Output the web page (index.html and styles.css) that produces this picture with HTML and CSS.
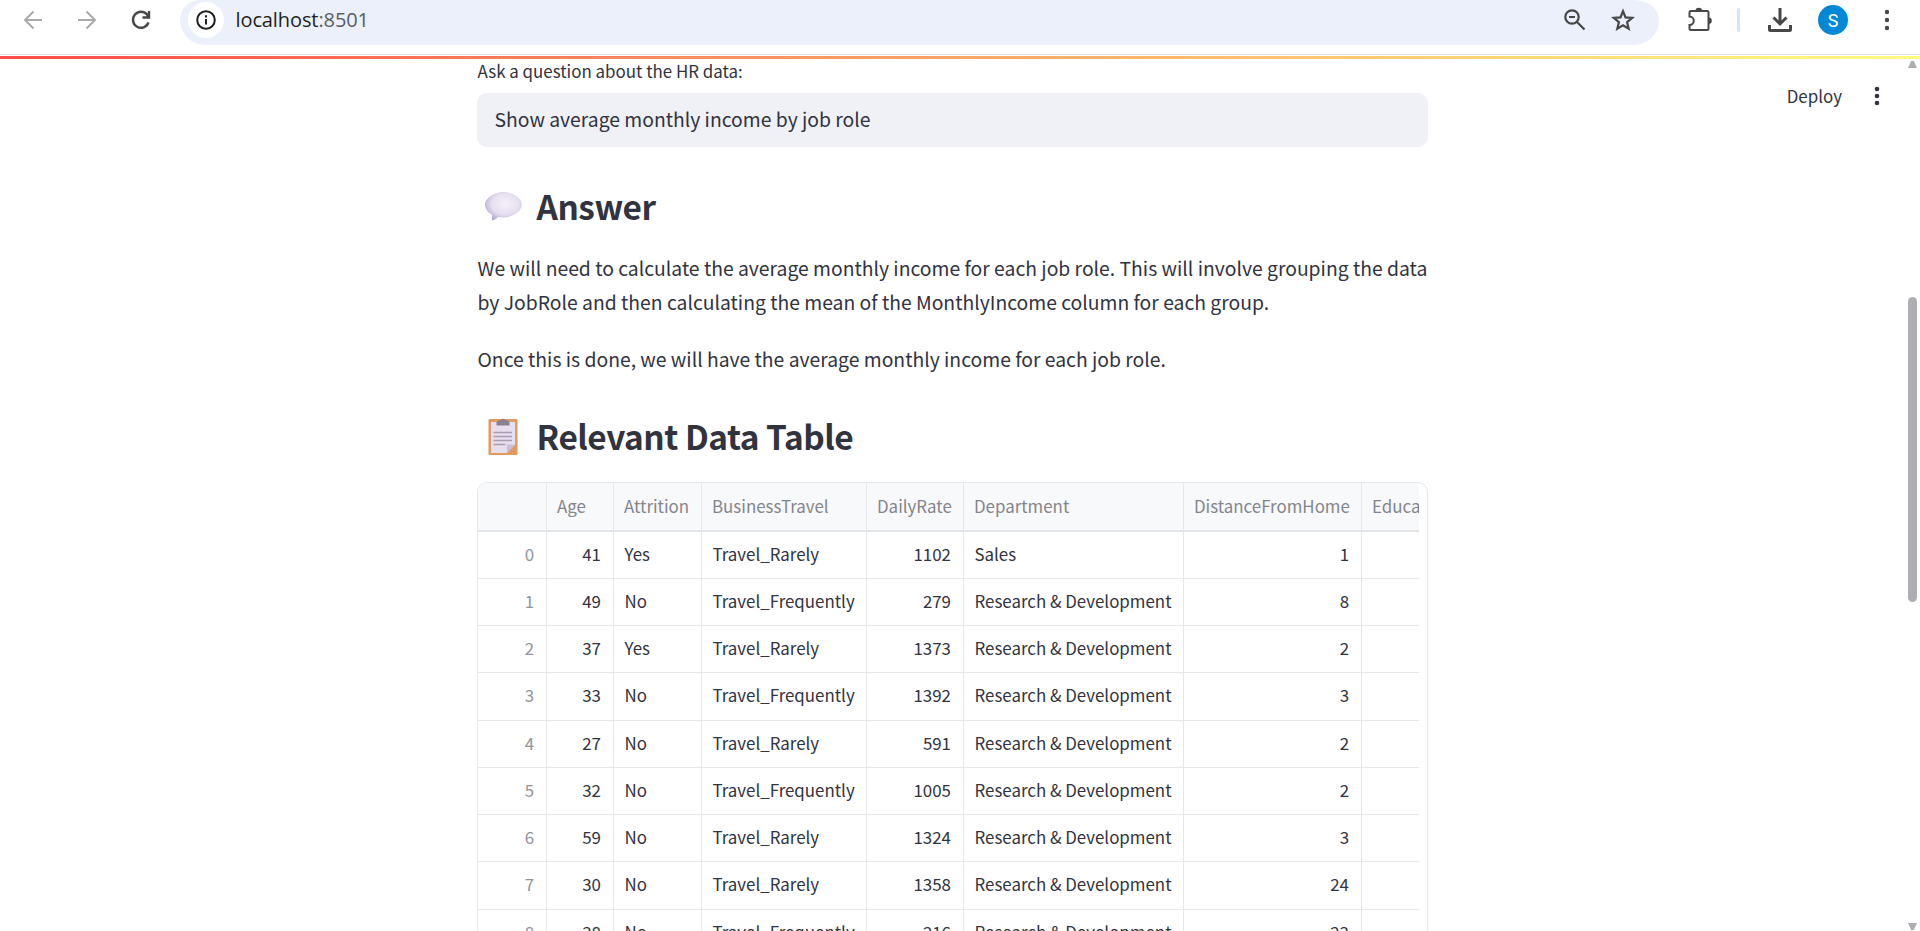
FILE: index.html
```html
<!DOCTYPE html>
<html lang="en">
<head>
<meta charset="utf-8">
<title>localhost:8501</title>
<link rel="stylesheet" href="styles.css">
</head>
<body>
<header class="toolbar">
  <nav class="nav">
    <svg class="faded" width="20" height="20" viewBox="0 0 20 20"><path d="M19 10H2M10.500 1.500L2 10l8.500 8.500"/></svg>
    <svg class="faded" width="20" height="20" viewBox="0 0 20 20"><path d="M1 10h17M9.500 1.500L18 10l-8.500 8.500"/></svg>
    <svg class="reload" width="20" height="20" viewBox="0 0 20 20"><path d="M17.500 12.500A8 8 0 1 1 16 4.500l1.500 2M18 1v6.500h-6.500"/></svg>
  </nav>
  <div class="omnibox">
    <span class="info"><svg width="20" height="20" viewBox="0 0 20 20"><circle cx="10" cy="10" r="8.800"/><path d="M10 9v5.500M10 5.300v2.200"/></svg></span>
    <span class="url">localhost<span class="port">:8501</span></span>
    <svg class="zoom" width="22" height="22" viewBox="0 0 22 22"><circle cx="8" cy="8" r="6.700"/><path d="M5 8h6M13 13l7.500 7.500"/></svg>
    <svg class="star" width="24" height="24" viewBox="0 0 24 24"><path d="M12 3.200l2.500 6.200 6.700.5-5.100 4.300 1.600 6.500L12 17.200l-5.700 3.500 1.600-6.500-5.100-4.300 6.700-.5z"/></svg>
  </div>
  <div class="actions">
    <svg class="puzzle" width="26" height="26" viewBox="0 0 26 26"><path d="M4 4h16a1.500 1.500 0 0 1 1.500 1.500v16a1.500 1.500 0 0 1-1.500 1.500H4a1.500 1.500 0 0 1-1.500-1.500V18a4 4 0 0 0 0-8.500v-4A1.500 1.500 0 0 1 4 4z"/><path class="solid" d="M8.500 4a3.300 3.300 0 0 1 6.600 0zM21.500 10.500a3.300 3.300 0 0 1 0 6.600z"/></svg>
    <span class="divider"></span>
    <svg class="download" width="24" height="24" viewBox="0 0 24 24"><path d="M12 0v15.500M5.500 9.500L12 16l6.500-6.500M1.500 17v4.500a1 1 0 0 0 1 1h19a1 1 0 0 0 1-1V17"/></svg>
    <span class="avatar">S</span>
    <svg class="dots" width="6" height="22" viewBox="0 0 6 22"><circle cx="3" cy="3" r="2.200"/><circle cx="3" cy="11" r="2.200"/><circle cx="3" cy="19" r="2.200"/></svg>
  </div>
</header>
<div class="decoration"></div>
<div class="viewport">
  <main class="content">
    <label class="label">Ask a question about the HR data:</label>
    <div class="input">Show average monthly income by job role</div>
    <h3 class="heading">
      <svg class="emoji bubble" width="38" height="38" viewBox="0 0 38 38">
        <defs><radialGradient id="bubble" cx=".55" cy=".42" r=".62"><stop offset="0" stop-color="#f6f1f8"/><stop offset=".6" stop-color="#e6dff0"/><stop offset="1" stop-color="#b5a8d2"/></radialGradient></defs>
        <path fill="url(#bubble)" d="M19.500 4C11 4 1 10 1 16.500c0 4.500 3 8 7 10.200V32.500c2.500-.5 4.500-1.800 6-3.500 1.600.3 3.300.5 5.500.5 9 0 18.300-6.500 18.300-13S28 4 19.500 4z"/>
      </svg>
      <span>Answer</span>
    </h3>
    <p class="para">We will need to calculate the average monthly income for each job role. This will involve grouping the data<br>by JobRole and then calculating the mean of the MonthlyIncome column for each group.</p>
    <p class="para">Once this is done, we will have the average monthly income for each job role.</p>
    <h3 class="heading second">
      <svg class="emoji clipboard" width="38" height="38" viewBox="0 0 38 38">
        <path fill="#e09a62" d="M5.500 2h27a1 1 0 0 1 1 1v34a1 1 0 0 1-1 1h-27a1 1 0 0 1-1-1V3a1 1 0 0 1 1-1z"/>
        <path fill="#e6dff0" d="M7 5h24v22.500L23 36H7z"/>
        <path fill="#c9bddb" d="M23 36v-8.500h8z"/>
        <path fill="#8b8092" d="M12.500 8.500V5l3-2H17a2.200 2.200 0 0 1 4 0h1.500l3 2v3.500z"/>
        <path stroke="#a69db0" stroke-width="1.700" d="M9.500 15.500H28M9.500 19.500H28M9.500 23.500H28M9.500 27.500h12"/>
      </svg>
      <span>Relevant Data Table</span>
    </h3>
    <div class="frame"><div class="grid" id="grid"></div></div>
  </main>
  <div class="deploy"><span>Deploy</span><svg class="dots dark" width="6" height="20" viewBox="0 0 6 20"><circle cx="3" cy="3" r="2.300"/><circle cx="3" cy="10" r="2.300"/><circle cx="3" cy="17" r="2.300"/></svg></div>
  <div class="scrollbar"><i class="up"></i><i class="thumb"></i><i class="down"></i></div>
</div>
<script src="table.js"></script>
</body>
</html>
```
FILE: table.js
```js
const head = ["", "Age", "Attrition", "BusinessTravel", "DailyRate", "Department", "DistanceFromHome", "Education"];
const RD = "Research & Development";
const rows = [
  [0, 41, "Yes", "Travel_Rarely", 1102, "Sales", 1],
  [1, 49, "No", "Travel_Frequently", 279, RD, 8],
  [2, 37, "Yes", "Travel_Rarely", 1373, RD, 2],
  [3, 33, "No", "Travel_Frequently", 1392, RD, 3],
  [4, 27, "No", "Travel_Rarely", 591, RD, 2],
  [5, 32, "No", "Travel_Frequently", 1005, RD, 2],
  [6, 59, "No", "Travel_Rarely", 1324, RD, 3],
  [7, 30, "No", "Travel_Rarely", 1358, RD, 24],
  [8, 38, "No", "Travel_Frequently", 216, RD, 23]
];
const grid = document.getElementById("grid");
function cell(text, cls) {
  const el = document.createElement("div");
  el.className = cls;
  el.textContent = text;
  grid.appendChild(el);
}
head.forEach(h => cell(h, "cell head"));
rows.forEach(r => [...r, ""].forEach((v, i) =>
  cell(v, "cell" + (typeof v === "number" ? " num" : "") + (i === 0 ? " index" : ""))));
```
FILE: styles.css
```css
* { box-sizing: border-box; }
body { margin: 0; height: 931px; overflow: hidden; display: flex; flex-direction: column; background: #fff; color: #31333f; font-family: "Noto Sans CJK SC", "Noto Sans", sans-serif; }
svg { display: block; flex: none; fill: none; stroke: #474747; stroke-width: 2.200; }

.toolbar { height: 55px; flex: none; display: flex; align-items: flex-start; border-bottom: 1px solid #dde1df; }
.nav { width: 180px; padding: 10px 0 0 23px; display: flex; gap: 34px; }
.nav .faded { stroke: #a9a9a9; stroke-width: 2; }
.nav .reload { stroke-width: 2.400; }
.omnibox { width: 1479px; height: 45px; padding: 0 24px 6px 7.500px; display: flex; align-items: center; background: #ecf0fa; border-radius: 20px 25px 25px 25px / 20px 20px 25px 25px; }
.info { width: 36px; height: 36px; border-radius: 50%; background: #fff; display: flex; align-items: center; justify-content: center; }
.info svg { stroke: #1f1f1f; stroke-width: 2; }
.url { flex: 1; padding-left: 12px; font: 20px/28px "Open Sans", sans-serif; letter-spacing: -.1px; color: #1f1f1f; }
.port { color: #5a5d62; }
.zoom { margin-right: 25px; }
.actions { display: flex; align-items: center; height: 40px; padding-left: 28px; }
.puzzle { stroke-width: 2; margin-right: 24px; }
.puzzle .solid { fill: #474747; stroke: none; }
.divider { width: 3px; height: 24px; background: #d3e3fd; border-radius: 2px; margin-right: 28px; }
.download { stroke-width: 3; margin-right: 26px; }
.avatar { width: 30px; height: 30px; border-radius: 50%; background: #0288d6; color: #fff; font: 18px/31px Roboto, sans-serif; text-align: center; margin-right: 36px; }
.dots { fill: #474747; stroke: none; }
.dark { fill: #31333f; }

.decoration { height: 3px; margin-top: 1px; flex: none; background: linear-gradient(90deg, #ff4b4b, #fffd80); }

.viewport { flex: 1; min-height: 0; display: flex; position: relative; overflow: hidden; }
.content { width: 951px; margin-left: 477px; flex: none; }
.label { display: block; height: 34px; padding-left: .5px; font-size: 16.920px; line-height: 24px; }
.input { height: 54px; padding-left: 17.500px; border-radius: 10px; background: #f0f1f6; font-size: 19.330px; line-height: 53px; }
.heading { margin: 0; height: 104px; padding: 37px 0 0 7px; display: flex; font-size: 33.400px; font-weight: 600; line-height: 44px; letter-spacing: -.480px; }
.emoji { stroke: none; margin-right: 14.500px; }
.bubble { margin-top: 4px; }
.clipboard { margin-top: 3px; }
.para { margin: 0 0 23px; padding-left: .5px; font-size: 19.330px; line-height: 34px; white-space: nowrap; }
.second { height: 83px; padding-top: 15px; }

.frame { height: 600px; padding-right: 8px; border: 1px solid #e6e7ea; border-radius: 10px; overflow: hidden; }
.grid { display: grid; grid-template-columns: 69px 67px 88px 165px 97px 220px 178px 57px; grid-template-rows: 48.600px; grid-auto-rows: 47.270px; overflow: hidden; }
.cell { border-right: 1px solid #e6e7ea; border-bottom: 1px solid #e6e7ea; padding: 0 12px 0 10.500px; font-size: 16.900px; line-height: 44px; white-space: nowrap; overflow: hidden; }
.cell:nth-child(8n) { border-right: 0; }
.cell.head { padding: 0 0 0 10px; background: #f8f9fb; color: #83858c; line-height: 46px; border-bottom: 2px solid #e4e5e9; }
.num { text-align: right; }
.index { color: #92949a; }

.deploy { position: absolute; top: 23px; right: 40px; display: flex; align-items: center; gap: 32px; font-size: 16.920px; line-height: 28px; }
.scrollbar { position: absolute; right: 3px; top: 0; width: 9px; height: 100%; }
.scrollbar i { position: absolute; left: 0; width: 9px; }
.thumb { top: 238px; height: 305px; border-radius: 5px; background: #aeadb1; }
.up { top: 2px; height: 7px; background: #aeadb1; clip-path: polygon(35% 0, 65% 0, 100% 100%, 0 100%); }
.down { bottom: 1px; height: 7px; background: #aeadb1; clip-path: polygon(0 0, 100% 0, 65% 100%, 35% 100%); }
```
